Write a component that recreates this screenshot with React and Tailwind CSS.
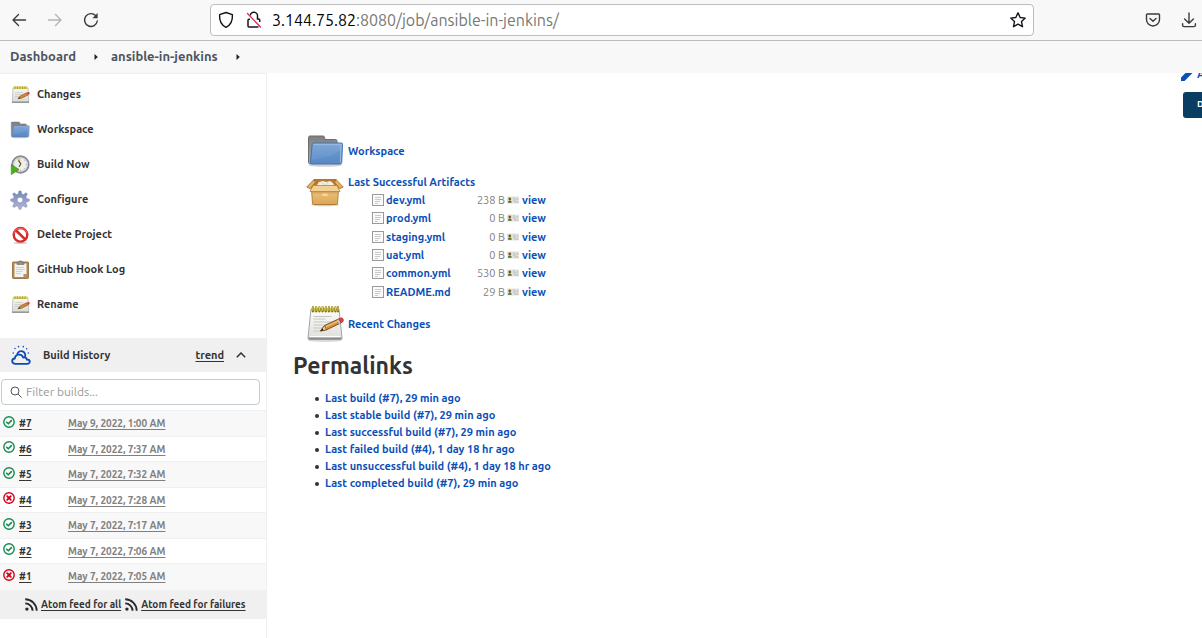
import React from "react";

function ArrowIcon({ flip, className }) {
  return (
    <svg width="16" height="16" viewBox="0 0 16 16" className={className} fill="none" stroke="currentColor" strokeWidth="1.4" strokeLinecap="round" strokeLinejoin="round" aria-hidden="true">
      {flip ? <path d="M1.5 8H14M8.5 2.5 14 8l-5.500 5.500" /> : <path d="M14.500 8H2M7.500 2.500 2 8l5.500 5.500" />}
    </svg>
  );
}

function ReloadIcon() {
  return (
    <svg width="16" height="16" viewBox="0 0 16 16" fill="none" stroke="#3b3b3f" strokeWidth="1.4" strokeLinecap="round" aria-hidden="true">
      <path d="M14.300 9A6.400 6.400 0 1 1 12.600 3.600" />
      <path d="M14.600 1v5.200H9.400z" fill="#3b3b3f" stroke="none" />
    </svg>
  );
}

function ShieldIcon() {
  return (
    <svg width="16" height="18" viewBox="0 0 16 18" fill="none" stroke="#15141a" strokeWidth="1.4" strokeLinejoin="round" aria-hidden="true">
      <path d="M8 1.500 14.400 3.700c.3 5.600-1.500 10.300-6.400 12.600C3.100 14 1.300 9.300 1.600 3.700z" />
    </svg>
  );
}

function InsecureIcon() {
  return (
    <svg width="16" height="18" viewBox="0 0 16 18" fill="none" aria-hidden="true">
      <path d="M4.300 4.500A3.600 3.600 0 0 1 11.500 5v3h1.200c.6 0 1 .4 1 1v2M4 8.200H3c-.6 0-1 .4-1 1v5.900c0 .6.400 1 1 1h9.500" stroke="#15141a" strokeWidth="1.5" />
      <path d="M1.500 2.500 14.500 16" stroke="#e22850" strokeWidth="1.300" strokeLinecap="round" />
    </svg>
  );
}

function StarIcon() {
  return (
    <svg width="18" height="18" viewBox="0 0 18 18" fill="none" stroke="#15141a" strokeWidth="1.4" strokeLinejoin="round" aria-hidden="true">
      <path d="m9 1.800 2.200 4.700 5.100.6-3.800 3.500 1 5.100L9 13.200l-4.500 2.500 1-5.100L1.700 7.100l5.100-.6z" />
    </svg>
  );
}

function PocketIcon() {
  return (
    <svg width="16" height="16" viewBox="0 0 16 16" fill="none" stroke="#3b3b3f" strokeWidth="1.4" strokeLinecap="round" strokeLinejoin="round" aria-hidden="true">
      <path d="M2.500 2h11c.6 0 1 .4 1 1v4.500a6.500 6.500 0 0 1-13 0V3c0-.6.400-1 1-1z" />
      <path d="M5 6.500 8 9.300l3-2.800" />
    </svg>
  );
}

function DownloadIcon() {
  return (
    <svg width="16" height="16" viewBox="0 0 16 16" fill="none" stroke="#3b3b3f" strokeWidth="1.400" strokeLinecap="round" strokeLinejoin="round" aria-hidden="true">
      <path d="M8 1v10.200M3.600 7 8 11.200 12.400 7M1.600 11.800v1.400c0 .9.500 1.400 1.400 1.400h10c.9 0 1.400-.5 1.400-1.400v-1.400" />
    </svg>
  );
}

function Caret() {
  return (
    <svg width="4" height="6" viewBox="0 0 4 6" className="shrink-0" aria-hidden="true">
      <path d="M.5 0 3.800 3 .5 6z" fill="#222" />
    </svg>
  );
}

function SmallNotepadIcon() {
  return (
    <svg width="20" height="20" viewBox="0 0 20 20" className="shrink-0" aria-hidden="true">
      <defs>
        <linearGradient id="sheet" x1="0" y1="0" x2="0" y2="1">
          <stop offset="0" stopColor="#f8f8f5" />
          <stop offset="1" stopColor="#d8d8d4" />
        </linearGradient>
      </defs>
      <path d="M3 3h15l.8 14.500H2.200z" fill="url(#sheet)" stroke="#b9b9b4" strokeWidth=".8" />
      <path d="M2 16.500h17v1.300H2z" fill="#8d8d88" />
      <path d="M5 7.500h8M5 9.500h6M5 11.500h4" stroke="#c9c9c5" strokeWidth=".8" />
      <path d="M3.500 1.500h14V4h-14z" fill="#d6cb5c" />
      <path d="M5 1.300V4M7.500 1.300V4M10 1.300V4M12.500 1.300V4M15 1.300V4" stroke="#a3982f" strokeWidth=".8" />
      <path d="m8 13.800 2.300-3L17 7.700l1.200 2.200-6.700 3.300z" fill="#cf8a3c" stroke="#80501f" strokeWidth=".6" />
      <path d="m8 13.800 1.400-1.800.8 1.200z" fill="#333" />
      <path d="m16.800 7.800 1.600-.7c1-.2 1.700 1.200.9 1.900l-1.300.9z" fill="#e03a40" />
    </svg>
  );
}

function NotepadIcon() {
  return (
    <svg width="38" height="38" viewBox="0 0 38 38" className="shrink-0" aria-hidden="true">
      <defs>
        <linearGradient id="paper" x1="0" y1="0" x2="0" y2="1">
          <stop offset="0" stopColor="#fdfdfb" />
          <stop offset="1" stopColor="#dededa" />
        </linearGradient>
      </defs>
      <ellipse cx="19" cy="35.500" rx="17" ry="1.500" fill="#000" opacity=".15" />
      <path d="M5 4h28l3 29c0 1-.6 1.500-1.500 1.500h-31C2.600 34.500 2 34 2 33z" fill="url(#paper)" stroke="#a3a39e" />
      <path d="M2.500 32.500h33v2h-33z" fill="#8f8f8a" />
      <path d="M4 31.500h30.500" stroke="#fff" />
      <path d="M7.500 11.500h18M7.500 14h12M7.500 17h19M7.500 20h11M7.500 23h9M7.500 26h7" stroke="#c6c6c2" />
      <rect x="5" y="3" width="28" height="3.500" fill="#c9bd45" />
      <path d="M7 2v4.500M10.200 2v4.500M13.400 2v4.500M16.600 2v4.500M19.800 2v4.500M23 2v4.500M26.200 2v4.500M29.400 2v4.500M32 2v4.500" stroke="#7d7420" strokeWidth="2" strokeLinecap="round" />
      <path d="M7 1.800v3.500M10.200 1.800v3.500M13.400 1.800v3.500M16.600 1.800v3.500M19.800 1.800v3.500M23 1.800v3.500M26.200 1.800v3.500M29.400 1.800v3.500M32 1.800v3.500" stroke="#ded25a" strokeWidth="1.100" strokeLinecap="round" />
      <path d="m14.500 26 4-5.500L33 13.800l2.200 4L20.500 24.800z" fill="#d9903a" stroke="#70451a" strokeWidth=".9" strokeLinejoin="round" />
      <path d="m19.500 21.800 13.700-6.300" stroke="#f6c47d" strokeWidth="1.200" />
      <path d="m14.500 26 4-5.500 2 4.300z" fill="#ecd2a2" stroke="#70451a" strokeWidth=".7" />
      <path d="m14.500 26 2-2.800 1 2z" fill="#222" />
      <path d="m31 14.900 1.800-1 2.200 4-1.900 1z" fill="#c5c5c5" />
      <path d="m32.800 13.900 2-1c2-.5 3.500 2.200 2 3.800L35 17.900z" fill="#e8404a" stroke="#a52028" strokeWidth=".6" />
    </svg>
  );
}

function FolderIcon({ size }) {
  return (
    <svg width={size} height={size} viewBox="0 0 38 38" className="shrink-0" aria-hidden="true">
      <defs>
        <linearGradient id="folder" x1="0" y1="0" x2="0" y2="1">
          <stop offset="0" stopColor="#7fa8d8" />
          <stop offset="1" stopColor="#5e8dc8" />
        </linearGradient>
        <linearGradient id="folderBack" x1="0" y1="0" x2="0" y2="1">
          <stop offset="0" stopColor="#7f7f7f" />
          <stop offset="1" stopColor="#a9a9a9" />
        </linearGradient>
      </defs>
      <ellipse cx="19" cy="33" rx="17" ry="1.800" fill="#000" opacity=".18" />
      <path d="M2.500 5.500c0-.9.600-1.500 1.500-1.500h13c.8 0 1.300.5 1.500 1.200L19 7.500h10.500c.9 0 1.500.6 1.500 1.500V31.500H3.500c-.7 0-1-.5-1-1.500z" fill="url(#folderBack)" stroke="#6d6d6d" />
      <path d="M7.500 11h27.800c.9 0 1.300.5 1.200 1.400l-.8 18.200c-.1.900-.6 1.400-1.500 1.400H5.300c-.8 0-1.100-.5-.9-1.300L6.200 12.400c.1-.9.500-1.400 1.300-1.400z" fill="url(#folder)" stroke="#3f70b0" />
      <path d="M7.500 12.300H35l-.7 18.200" fill="none" stroke="#a9c6e8" strokeWidth=".8" />
      <path d="M5.800 28C15 26 24 26 34.500 18L34 31H5.600z" fill="#376dae" opacity=".16" />
    </svg>
  );
}

function BuildIcon() {
  return (
    <svg width="20" height="20" viewBox="0 0 20 20" className="shrink-0" aria-hidden="true">
      <circle cx="10.500" cy="9.500" r="8.200" fill="#efefe8" stroke="#8989a3" strokeWidth="1.900" />
      <circle cx="10.500" cy="9.500" r="6.700" fill="none" stroke="#cdcdd8" strokeWidth=".8" />
      <path d="M10 9 7 4A7 7 0 0 1 10.500 3z" fill="#e6c75d" />
      <path d="m8.500 5.500 2.600 3.800M10.700 9.300 9 11.800" stroke="#45453a" strokeWidth="1.100" fill="none" />
      <path d="M16.800 9.500h-1M10.500 16v-1M14.800 5l-.7.700M14.900 14l-.7-.7" stroke="#999" strokeWidth=".8" />
      <path d="M1.300 9.500 9 14.500 1.300 19.500z" fill="#4fb01d" stroke="#3c8c18" strokeWidth=".7" />
    </svg>
  );
}

function GearIcon() {
  return (
    <svg width="20" height="20" viewBox="0 0 20 20" className="shrink-0" aria-hidden="true">
      <defs>
        <linearGradient id="gear" x1="0" y1="0" x2="0" y2="1">
          <stop offset="0" stopColor="#6f89b4" />
          <stop offset="1" stopColor="#b5b4d8" />
        </linearGradient>
      </defs>
      <path fillRule="evenodd" fill="url(#gear)" stroke="#8088b2" strokeWidth=".5" strokeLinejoin="round" d="M9 .9h2l.8 3.100 1.500.6 2.900-1.800 1.200 1.300-1.500 2.900.6 1.400 2.800.8v1.900l-2.800.9-.6 1.400 1.400 2.800-1.400 1.300-2.600-1.600-1.500.7L11 19.300H9l-.8-2.700-1.500-.7-2.800 1.600-1.300-1.300 1.500-2.800-.6-1.400-2.800-.9V9.200l2.800-.8.600-1.400-1.500-2.900 1.300-1.300 2.800 1.800 1.500-.6zM10 7.200a2.800 2.800 0 1 0 0 5.600 2.800 2.800 0 0 0 0-5.600z" />
    </svg>
  );
}

function DeleteIcon() {
  return (
    <svg width="20" height="20" viewBox="0 0 20 20" className="shrink-0" aria-hidden="true">
      <ellipse cx="10.500" cy="18" rx="7" ry="1" fill="#000" opacity=".2" />
      <circle cx="10.500" cy="9.800" r="6.800" fill="#fff" stroke="#d62c2c" strokeWidth="2.400" />
      <path d="m5.800 5.200 9.400 9.200" stroke="#d62c2c" strokeWidth="2.600" />
      <path d="M3.800 8.500a7 7 0 0 1 13.400-.4" fill="none" stroke="#ea7c7c" strokeWidth=".9" />
    </svg>
  );
}

function ClipboardIcon() {
  return (
    <svg width="20" height="20" viewBox="0 0 20 20" className="shrink-0" aria-hidden="true">
      <rect x="2.500" y="2" width="16" height="16.500" rx=".8" fill="#b98a4c" stroke="#8d6531" strokeWidth=".8" />
      <path d="M4.500 3.500h12v10.500L13.500 17h-9z" fill="#f3f3f1" />
      <path d="M16.500 14 13.500 17v-3z" fill="#92928e" />
      <path d="M6 7.500h8M6 9.500h8.500M6 11.500h6.500M6 13.500h5" stroke="#cdcdc9" strokeWidth=".9" />
      <path d="M7 2.200h1.500L9 1h3l.5 1.200H14v2.300H7z" fill="#8e918b" stroke="#6a6d68" strokeWidth=".6" />
    </svg>
  );
}

function BoxIcon() {
  return (
    <svg width="38" height="32" viewBox="0 0 38 32" className="shrink-0" aria-hidden="true">
      <defs>
        <linearGradient id="carton" x1="0" y1="0" x2="0" y2="1">
          <stop offset="0" stopColor="#efc684" />
          <stop offset="1" stopColor="#dba557" />
        </linearGradient>
      </defs>
      <ellipse cx="19" cy="27.500" rx="14" ry="1.800" fill="#000" opacity=".2" />
      <path d="M8 2.500h22l3 8.500H5z" fill="#b67a2b" stroke="#9b6724" strokeWidth=".8" />
      <path d="m11 8 2-3 4-1 3 1 4-1 3 2 1.500 3H11z" fill="#f1efe6" />
      <path d="m16 5 2 3M22 5l-2 3" stroke="#cfc9b8" strokeWidth=".8" />
      <path d="M5.500 12h27l-1 14.500c0 .6-.4 1-1 1h-23c-.6 0-1-.4-1-1z" fill="url(#carton)" stroke="#ad772c" strokeWidth=".9" />
      <path d="M6 14h26l-.3 2.500H6.300z" fill="#a56d22" opacity=".3" />
      <path d="M7 8.500h24l3 6H4z" fill="#f4d193" stroke="#b98338" strokeWidth=".8" />
      <path d="M8 2.500.8 10l3.400 1.700L9.300 5.500zM30 2.500l7.200 7.500-3.400 1.700-5.100-6.200z" fill="#e5b262" stroke="#a87127" strokeWidth=".9" strokeLinejoin="round" />
      <path d="M16.500 16.500h5V19h-5z" fill="#fae5b8" opacity=".7" />
    </svg>
  );
}

function FileIcon() {
  return (
    <svg width="12" height="12" viewBox="0 0 12 12" className="block" aria-hidden="true">
      <rect x=".5" y=".5" width="11" height="11" fill="#fafafa" stroke="#999b96" />
      <path d="M3 3.500h6M3 5.500h6M3 7.500h5M3 9.500h3" stroke="#c4c4c4" strokeWidth=".9" />
    </svg>
  );
}

function FingerprintIcon() {
  return (
    <svg width="12" height="8" viewBox="0 0 12 8" className="block" aria-hidden="true">
      <rect x="0" y=".500" width="12" height="7" rx=".5" fill="#e2e2de" />
      <path d="M6 2h2M9 3h2.500M6 4h3M7 6h4.500" stroke="#b3b3af" strokeWidth=".8" />
      <circle cx="2.800" cy="3" r="1.400" fill="#85551f" />
      <path d="M1 6.800c0-3.200 3.700-3.200 3.700 0z" fill="#4f6e20" />
    </svg>
  );
}

function WeatherIcon() {
  return (
    <svg width="20" height="20" viewBox="0 0 20 20" className="shrink-0" fill="none" stroke="#0b4ab8" strokeWidth="1.800" strokeLinecap="round" strokeLinejoin="round" aria-hidden="true">
      <path d="M4.500 18.800c-4.300 0-4.300-5-.6-5.300.2-4.600 7-5.300 8.200-1 2.400-.5 3.600.8 3.600 2 4.100 0 4.100 4.300.3 4.300z" />
      <path d="M6.300 9a4.100 4.100 0 1 1 7.700 2.800" />
      <path d="M4 3.500v.1M7.500 1.600v.1M12.300 1.600v.1M15.700 3.700v.1M17.300 8v.1M2.200 8v.1" strokeWidth="1.500" />
    </svg>
  );
}

function StatusIcon({ ok }) {
  return (
    <svg width="12" height="12" viewBox="0 0 12 12" fill="none" className={ok ? "block text-[#138a50]" : "block text-[#d0021b]"} stroke="currentColor" role="img" aria-label={ok ? "Success" : "Failed"}>
      <circle cx="6" cy="6" r="5.200" strokeWidth="1.400" />
      {ok ? <path d="M3.700 6.200 5.300 7.800 8.400 4.600" strokeWidth="1.600" strokeLinecap="round" strokeLinejoin="round" /> : <path d="m4.200 4.200 3.600 3.600m0-3.600L4.200 7.800" strokeWidth="1.900" strokeLinecap="round" />}
    </svg>
  );
}

function FeedIcon() {
  return (
    <svg width="13" height="13" viewBox="0 0 13 13" className="shrink-0" fill="none" stroke="#2b2b2b" strokeWidth="1.900" aria-hidden="true">
      <circle cx="1.900" cy="11.100" r="1.700" fill="#2b2b2b" stroke="none" />
      <path d="M.2 5.400a7.400 7.400 0 0 1 7.400 7.400M.2 1.300a11.500 11.500 0 0 1 11.500 11.500" />
    </svg>
  );
}

const tasks = [
  ["Changes", <SmallNotepadIcon />],
  ["Workspace", <FolderIcon size={20} />],
  ["Build Now", <BuildIcon />],
  ["Configure", <GearIcon />],
  ["Delete Project", <DeleteIcon />],
  ["GitHub Hook Log", <ClipboardIcon />],
  ["Rename", <SmallNotepadIcon />],
];

const builds = [
  [7, true, "May 9, 2022, 1:00 AM"],
  [6, true, "May 7, 2022, 7:37 AM"],
  [5, true, "May 7, 2022, 7:32 AM"],
  [4, false, "May 7, 2022, 7:28 AM"],
  [3, true, "May 7, 2022, 7:17 AM"],
  [2, true, "May 7, 2022, 7:06 AM"],
  [1, false, "May 7, 2022, 7:05 AM"],
];

const artifacts = [
  ["dev.yml", "238 B"],
  ["prod.yml", "0 B"],
  ["staging.yml", "0 B"],
  ["uat.yml", "0 B"],
  ["common.yml", "530 B"],
  ["README.md", "29 B"],
];

const permalinks = [
  "Last build (#7), 29 min ago",
  "Last stable build (#7), 29 min ago",
  "Last successful build (#7), 29 min ago",
  "Last failed build (#4), 1 day 18 hr ago",
  "Last unsuccessful build (#4), 1 day 18 hr ago",
  "Last completed build (#7), 29 min ago",
];

function BrowserBar() {
  return (
    <div className="flex h-[41px] items-center border-b border-[#bdbdbd] bg-[#f8f8f8]">
      <div className="flex w-[210px] shrink-0 items-center gap-5 pl-[11px]">
        <button type="button" aria-label="Back"><ArrowIcon className="text-[#3b3b3f]" /></button>
        <button type="button" aria-label="Forward" disabled><ArrowIcon flip className="text-[#b4b4b4]" /></button>
        <button type="button" aria-label="Reload"><ReloadIcon /></button>
      </div>
      <div className="flex h-8 min-w-0 flex-1 items-center rounded border border-[#bdbdbd] bg-white pr-[6px] pl-[7px]">
        <ShieldIcon />
        <span className="ml-3"><InsecureIcon /></span>
        <p className="ml-[10px] flex-1 truncate text-[16px] text-[#777]">
          <span className="text-black">3.144.75.82</span>:8080/job/ansible-in-jenkins/
        </p>
        <button type="button" aria-label="Bookmark this page"><StarIcon /></button>
      </div>
      <div className="flex w-[168px] shrink-0 items-center justify-end gap-5 pr-[5px]">
        <button type="button" aria-label="Save to Pocket"><PocketIcon /></button>
        <button type="button" aria-label="Downloads"><DownloadIcon /></button>
      </div>
    </div>
  );
}

function BuildHistory() {
  return (
    <section className="mt-4 text-[#333]">
      <header className="flex h-[34px] items-center bg-[#f0f0f0] pr-5 pl-[11px] text-[11px] font-bold">
        <WeatherIcon />
        <h2 className="ml-3 flex-1">Build History</h2>
        <a href="#trend" className="underline underline-offset-2">trend</a>
        <button type="button" aria-label="Collapse" className="ml-3">
          <svg width="10" height="6" viewBox="0 0 10 6" fill="none" stroke="#333" strokeWidth="1.500" aria-hidden="true"><path d="M.8 5.200 5 1l4.200 4.200" /></svg>
        </button>
      </header>
      <label className="mt-[7px] mr-[6px] ml-px flex h-[26px] items-center gap-1 rounded border border-[#c3ccd1] bg-white px-2">
        <svg width="12" height="12" viewBox="0 0 12 12" className="shrink-0" fill="none" stroke="#555" aria-hidden="true"><circle cx="5" cy="5" r="4" /><path d="m8 8 3.500 3.500" /></svg>
        <input type="text" aria-label="Filter builds" placeholder="Filter builds..." className="w-full min-w-0 bg-transparent text-[12px] outline-none placeholder:text-[#999]" />
      </label>
      <table className="mt-[5px] w-full border-collapse text-[10px] font-bold">
        <tbody>
          {builds.map(([n, ok, date]) => (
            <tr key={n} className="h-[25px] border-t border-[#f0f0f0] odd:h-[26px] odd:bg-[#f8f8f8]">
              <td className="w-[19px] p-0 pb-1 pl-[3px]"><StatusIcon ok={ok} /></td>
              <td className="w-[49px] p-0"><a href={"#build-" + n} className="underline underline-offset-2">#{n}</a></td>
              <td className="p-0"><a href={"#build-" + n} className="text-[#808080] underline underline-offset-2">{date}</a></td>
            </tr>
          ))}
        </tbody>
      </table>
      <footer className="flex h-[29px] items-center gap-1 bg-[#f0f0f0] pl-[25px] text-[10px] font-bold whitespace-nowrap">
        <a href="#feed-all" className="flex items-center gap-[3px]"><FeedIcon /><span className="underline underline-offset-2">Atom feed for all</span></a>
        <a href="#feed-failures" className="flex items-center gap-[3px]"><FeedIcon /><span className="underline underline-offset-2">Atom feed for failures</span></a>
      </footer>
    </section>
  );
}

function Main() {
  return (
    <main className="min-w-0 flex-1 pl-[26px] text-[11px] font-bold text-[#0b4fb8]">
      <a href="#workspace" className="mt-[59px] ml-[13px] flex w-max items-center gap-1">
        <FolderIcon size={38} />
        Workspace
      </a>
      <div className="mt-1 ml-[13px] flex gap-1">
        <div className="pt-[3px]"><BoxIcon /></div>
        <div>
          <a href="#artifacts" className="block leading-[17px]">Last Successful Artifacts</a>
          <table className="ml-5 h-[110px] border-collapse">
            <tbody>
              {artifacts.map(([name, size]) => (
                <tr key={name} className="leading-[18px]">
                  <td className="w-[18px] p-0 pl-1"><FileIcon /></td>
                  <td className="w-[84px] p-0"><a href={"#" + name}>{name}</a></td>
                  <td className="w-[35px] p-0 text-right font-normal whitespace-nowrap text-[#808080]">{size}</td>
                  <td className="w-[17px] p-0 pl-[2px]"><FingerprintIcon /></td>
                  <td className="p-0"><a href={"#view-" + name}>view</a></td>
                </tr>
              ))}
            </tbody>
          </table>
        </div>
      </div>
      <a href="#changes" className="mt-1 ml-[13px] flex w-max items-center gap-1">
        <NotepadIcon />
        Recent Changes
      </a>
      <h2 className="mt-2 text-[23px] leading-[30px] font-bold text-[#333]">Permalinks</h2>
      <ul className="mt-[9px] ml-[22px] leading-[17px]">
        {permalinks.map((text) => (
          <li key={text} className="flex items-center gap-[6px] before:size-1 before:rounded-full before:bg-[#333]"><a href="#permalink">{text}</a></li>
        ))}
      </ul>
    </main>
  );
}

export default function App() {
  return (
    <div className="min-h-screen bg-white font-['Ubuntu','Noto_Sans',sans-serif] text-[#333]">
      <BrowserBar />
      <nav aria-label="Breadcrumb" className="flex h-8 items-center bg-[#f8f8f8] pl-[10px] text-[13px] font-bold text-[#4d545d]">
        <a href="#dashboard">Dashboard</a>
        <span className="mr-[13px] ml-[18px]"><Caret /></span>
        <a href="#job">ansible-in-jenkins</a>
        <span className="mr-[13px] ml-[18px]"><Caret /></span>
      </nav>
      <div className="flex min-h-[calc(100vh-73px)]">
        <aside className="w-[267px] shrink-0 border-t border-r border-[#efefef] pt-[3px]">
          <ul className="text-[11px] font-semibold">
            {tasks.map(([name, icon]) => (
              <li key={name}>
                <a href="#task" className="flex h-[35px] items-center gap-[7px] pl-[10px]">
                  {icon}
                  {name}
                </a>
              </li>
            ))}
          </ul>
          <BuildHistory />
        </aside>
        <Main />
        <div className="w-[21px] shrink-0 overflow-hidden">
          <a href="#description" className="-mt-[7px] flex w-max items-center text-[11px] leading-4 font-semibold text-[#0b4fb8]">
            <svg width="16" height="16" viewBox="0 0 16 16" fill="#0b4fb8" aria-hidden="true"><path d="M0 11.500 9.500 2 13 5.500 3.500 15H0zM10.500 1l1-1L16 3.500l-2 1z" /></svg>
            Add description
          </a>
          <button type="button" className="mt-[10px] ml-[2px] h-[26px] rounded-[3px] bg-[#0a3d62] px-[14px] text-[9px] font-bold whitespace-nowrap text-white">Disable Project</button>
        </div>
      </div>
    </div>
  );
}
